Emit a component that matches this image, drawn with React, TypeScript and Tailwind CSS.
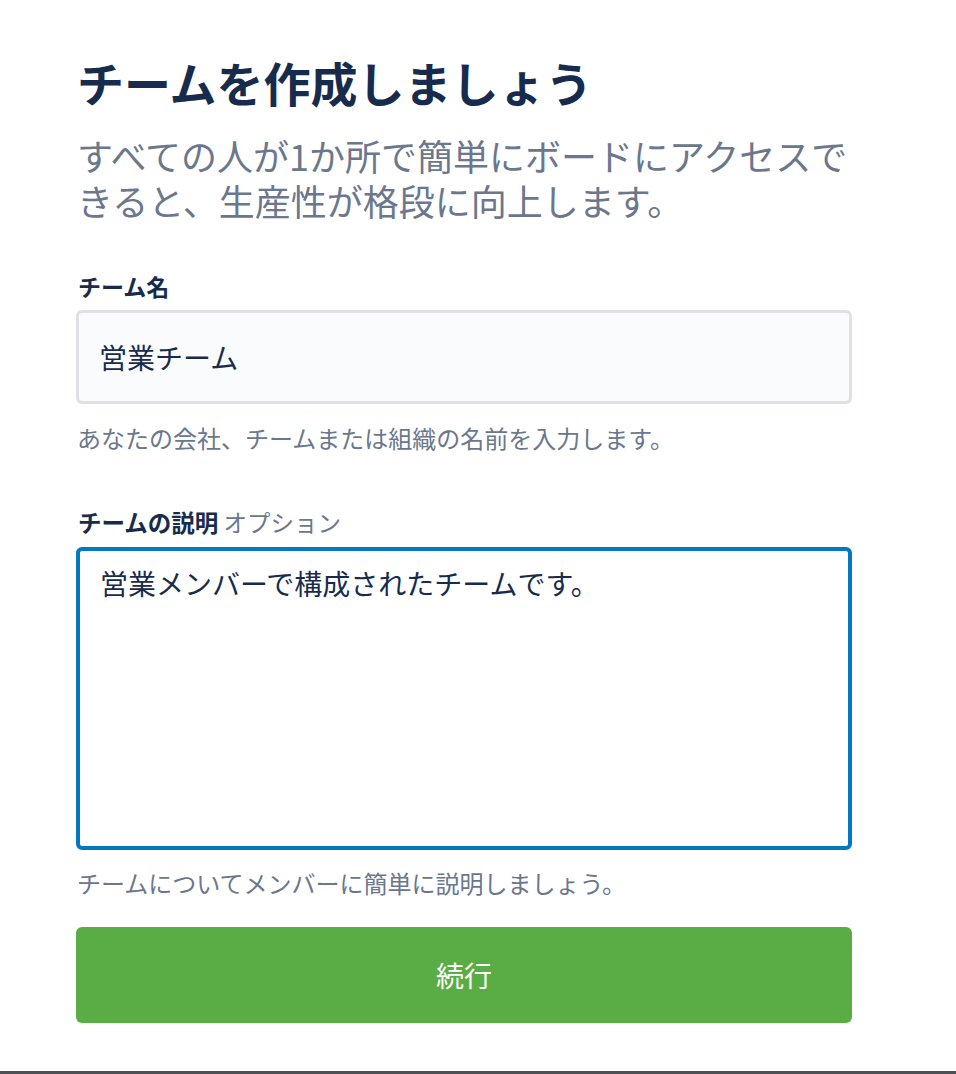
import React from 'react';

export default function App() {
  return (
    <div
      className="flex h-[1074px] flex-col bg-white"
      style={{ fontFamily: '"Noto Sans CJK JP", "Noto Sans", sans-serif' }}
    >
      <div className="ml-[76px] w-[776px] pt-[54px]">
        <h1 className="ml-[1px] text-[47px] leading-[56px] font-bold text-[#172b4d]">
          チームを作成しましょう
        </h1>
        <p className="mt-[23px] ml-[1px] text-[36px] leading-[45px] text-[#6b778c]">
          すべての人が1か所で簡単にボードにアクセスできると、生産性が格段に向上します。
        </p>

        <form className="mt-[48px]">
          <label className="ml-[2px] block text-[23px] leading-[30px] font-bold text-[#172b4d]">
            チーム名
          </label>
          <input
            className="mt-[9px] block h-[94px] w-full rounded-[6px] border-[3px] border-[#dfe1e6] bg-[#fafbfc] px-[20px] text-[28px] text-[#172b4d] outline-none"
            defaultValue="営業チーム"
          />
          <p className="mt-[19px] ml-[1px] text-[24px] leading-[30px] text-[#6b778c]">
            あなたの会社、チームまたは組織の名前を入力します。
          </p>

          <label className="mt-[54px] ml-[2px] block text-[23.5px] leading-[30px] text-[#172b4d]">
            <span className="font-bold">チームの説明</span>{' '}
            <span className="text-[#6b778c]">オプション</span>
          </label>
          <textarea
            className="mt-[10px] block h-[303px] w-full resize-none rounded-[6px] border-[4px] border-[#0079bf] bg-white px-[20px] pt-[12px] text-[28px] leading-[40px] text-[#172b4d] outline-none"
            defaultValue="営業メンバーで構成されたチームです。"
          />
          <p className="mt-[18px] ml-[1px] text-[24px] leading-[30px] text-[#6b778c]">
            チームについてメンバーに簡単に説明しましょう。
          </p>

          <button
            type="button"
            className="mt-[29px] flex h-[96px] w-full items-center justify-center rounded-[6px] bg-[#5aac44] text-[28px] text-white"
          >
            続行
          </button>
        </form>
      </div>
      <div className="flex-1" />
      <div className="h-[3px] bg-[#4d5156]" />
    </div>
  );
}
